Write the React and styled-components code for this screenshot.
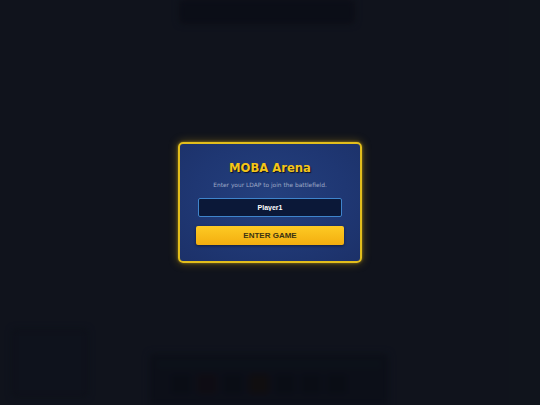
import React, { useState } from "react";
import styled, { createGlobalStyle } from "styled-components";

const GlobalStyle = createGlobalStyle`
  html, body {
    margin: 0;
    padding: 0;
    background: #11151f;
    font-family: "Liberation Sans", Arial, sans-serif;
  }
  * { box-sizing: border-box; }
`;

const Screen = styled.div`
  position: relative;
  width: 540px;
  height: 405px;
  overflow: hidden;
  background: #12161f;
`;

// blurred game HUD behind the modal
const GameLayer = styled.div`
  height: 100%;
  display: flex;
  flex-direction: column;
  justify-content: space-between;
  filter: blur(3px);
`;

const TopBar = styled.div`
  align-self: center;
  width: 176px;
  height: 24px;
  background: #0c0f18;
  border-radius: 0 0 4px 4px;
  transform: translateX(-3px);
`;

const BottomRow = styled.div`
  display: grid;
  grid-template-columns: 1fr 240px 1fr;
  align-items: end;
  padding: 0 12px 8px 12px;
`;

const Minimap = styled.div`
  width: 76px;
  height: 68px;
  background: #10141e;
  border: 2px solid #0c0f17;
  border-radius: 3px;
`;

const AbilityBar = styled.div`
  height: 52px;
  margin-bottom: -8px;
  transform: translateX(-1px);
  background: #0d111a;
  border-radius: 4px 4px 0 0;
  padding: 6px 8px;
  display: flex;
  flex-direction: column;
  gap: 5px;
`;

const XpStrip = styled.div`
  height: 10px;
  background: #0d131b;
  border-radius: 2px;
`;

const Slots = styled.div`
  display: flex;
  gap: 6px;
  padding: 0 14px;
`;

const Slot = styled.div`
  width: 20px;
  height: 20px;
  border-radius: 3px;
  background: ${(p) => p.tint || "#0b0e16"};
`;

const Overlay = styled.div`
  position: absolute;
  inset: 0;
  display: flex;
  align-items: center;
  justify-content: center;
  background: rgba(10, 12, 18, 0.2);
`;

const Card = styled.div`
  width: 184px;
  padding: 17px 16px 16px;
  border: 2px solid #e2be1c;
  border-radius: 5px;
  background: radial-gradient(
    ellipse at 50% 45%,
    #24407e 0%,
    #1f3773 60%,
    #1c3169 100%
  );
  box-shadow: 0 0 10px rgba(240, 196, 20, 0.35),
    0 0 3px rgba(240, 196, 20, 0.5);
  display: flex;
  flex-direction: column;
  align-items: center;
`;

const Title = styled.h1`
  margin: 0;
  font-family: "DejaVu Sans", Verdana, sans-serif;
  font-size: 11.6px;
  line-height: 15px;
  font-weight: 700;
  color: #f4c518;
  text-shadow: 1px 1px 1px rgba(0, 0, 0, 0.7);
`;

const Subtitle = styled.p`
  margin: 5px 0 0;
  font-family: "DejaVu Sans", Verdana, sans-serif;
  font-size: 5.9px;
  line-height: 8px;
  color: #9ea9c6;
`;

const NameInput = styled.input`
  margin-top: 9px;
  width: 144px;
  height: 19px;
  border: 1px solid #3f84cc;
  border-radius: 2px;
  background: #0b1838;
  color: #ffffff;
  font-family: "Liberation Sans", Arial, sans-serif;
  font-weight: 700;
  font-size: 7px;
  text-align: center;
  outline: none;
  padding: 0;
`;

const EnterButton = styled.button`
  margin-top: 9px;
  width: 148px;
  height: 19px;
  border: none;
  border-radius: 2px;
  background: linear-gradient(180deg, #fdca24 0%, #f3ae0f 100%);
  box-shadow: 0 1px 3px rgba(0, 0, 0, 0.45);
  color: #3b3312;
  font-family: "Liberation Sans", Arial, sans-serif;
  font-weight: 700;
  font-size: 8px;
  cursor: pointer;
  padding: 0;
`;

export default function App() {
  const [name, setName] = useState("Player1");

  return (
    <Screen>
      <GlobalStyle />
      <GameLayer>
        <TopBar />
        <BottomRow>
          <Minimap />
          <AbilityBar>
            <XpStrip />
            <Slots>
              <Slot />
              <Slot tint="#100d14" />
              <Slot />
              <Slot tint="#120f10" />
              <Slot />
              <Slot />
              <Slot />
            </Slots>
          </AbilityBar>
          <div />
        </BottomRow>
      </GameLayer>
      <Overlay>
        <Card>
          <Title>MOBA Arena</Title>
          <Subtitle>Enter your LDAP to join the battlefield.</Subtitle>
          <NameInput value={name} onChange={(e) => setName(e.target.value)} />
          <EnterButton>ENTER GAME</EnterButton>
        </Card>
      </Overlay>
    </Screen>
  );
}
